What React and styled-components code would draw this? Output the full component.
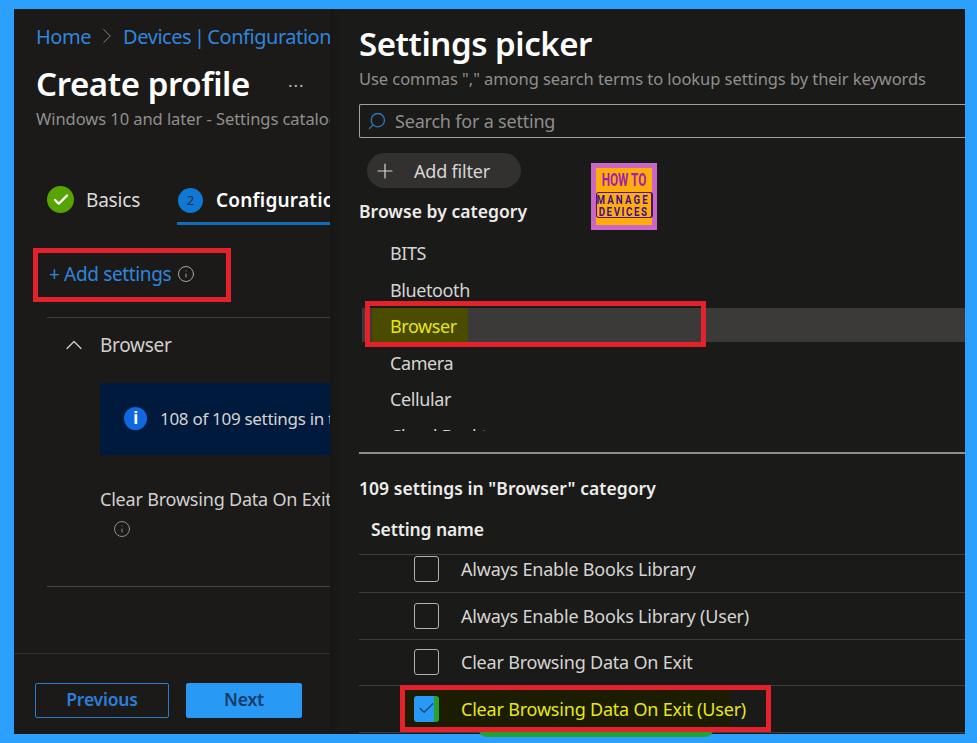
import React from "react";
import styled, { createGlobalStyle } from "styled-components";
import { Check, ChevronRight, ChevronUp, Info, Plus, Search } from "lucide-react";

const Global = createGlobalStyle`
  html, body { margin: 0; padding: 0; background: #2ba0ff; }
  * { box-sizing: border-box; }
`;

const Frame = styled.div`
  position: relative;
  width: 977px;
  height: 743px;
  padding: 9px 12px 9px 14px;
  display: flex;
  overflow: hidden;
  background: #2ba0ff;
  font-family: "Noto Sans", "Open Sans", sans-serif;
  color: #d6d4d2;
  white-space: nowrap;
`;

const LeftPanel = styled.section`
  width: 316px;
  flex: none;
  display: flex;
  flex-direction: column;
  overflow: hidden;
  background: #1b1a19;
`;

const Breadcrumb = styled.nav`
  margin-top: 13px;
  padding-left: 22px;
  height: 28px;
  display: flex;
  align-items: center;
  gap: 3px;
  font-size: 20px;
  letter-spacing: -0.45px;
  word-spacing: -2px;
  color: #2f86dc;
  svg { color: #8a8886; flex: none; }
`;

const TitleRow = styled.div`
  margin-top: 11px;
  padding-left: 22px;
  height: 44px;
  display: flex;
  align-items: center;
  gap: 38px;
`;

const PageTitle = styled.h1`
  margin: 0;
  font-size: 33px;
  font-weight: 600;
  letter-spacing: -0.4px;
  color: #ffffff;
`;

const Ellipsis = styled.span`
  padding-bottom: 6px;
  color: #b5b3b1;
  font-size: 17px;
  letter-spacing: 1px;
`;

const Subtitle = styled.p`
  margin: ${(p) => p.$top}px 0 0;
  padding-left: ${(p) => p.$left}px;
  height: 22px;
  line-height: 22px;
  font-size: 16.5px;
  letter-spacing: -0.06px;
  color: #918f8d;
`;

const Tabs = styled.div`
  margin-top: 46px;
  padding-left: 33px;
  height: 50px;
  display: flex;
  gap: 37px;
`;

const Tab = styled.div`
  height: 49px;
  display: flex;
  align-items: center;
  gap: ${(p) => (p.$active ? 13 : 12)}px;
  flex: ${(p) => (p.$active ? "1 0 auto" : "none")};
  padding: ${(p) => (p.$active ? "3px 0 1px" : "0 0 2px")};
  font-size: 19px;
  letter-spacing: ${(p) => (p.$active ? "0.2px" : "-0.2px")};
  font-weight: ${(p) => (p.$active ? 600 : 400)};
  color: ${(p) => (p.$active ? "#ffffff" : "#dddbd9")};
  border-bottom: ${(p) => (p.$active ? "3px solid #0f6cbd" : "0")};
`;

const StepNumber = styled.span`
  width: 25px;
  height: 25px;
  border-radius: 50%;
  margin-left: 1px;
  display: flex;
  align-items: center;
  justify-content: center;
  background: #0f78d4;
  color: #12294a;
  font-size: 13px;
  font-weight: 400;
`;

const StepDone = styled.span`
  width: 27px;
  height: 27px;
  border-radius: 50%;
  display: flex;
  align-items: center;
  justify-content: center;
  background: #57a300;
  color: #fff;
`;

const AddSettings = styled.div`
  margin-top: 34px;
  padding-left: 35px;
  height: 28px;
  display: flex;
  align-items: center;
  gap: 6px;
  font-size: 19px;
  letter-spacing: -0.35px;
  color: #2f86dc;
  svg { color: #aaa8a6; }
`;

const Section = styled.div`
  margin: 29px 0 0 33px;
  height: 270px;
  border-top: 1px solid #3f3e3d;
  border-bottom: 1px solid #4a4948;
`;

const SectionHeader = styled.div`
  margin-top: 13px;
  padding-left: 13px;
  height: 28px;
  display: flex;
  align-items: center;
  gap: 12px;
  font-size: 19px;
  letter-spacing: -0.3px;
  color: #d2d0ce;
`;

const InfoBanner = styled.div`
  margin: 24px 0 0 53px;
  height: 72px;
  padding: 0 0 2px 24px;
  display: flex;
  align-items: center;
  gap: 13px;
  background: #001a3d;
  font-size: 17px;
  letter-spacing: -0.3px;
  color: #d6d4d2;
`;

const InfoDot = styled.span`
  width: 23px;
  height: 23px;
  border-radius: 50%;
  flex: none;
  display: flex;
  align-items: center;
  justify-content: center;
  background: #1068e0;
  color: #fff;
  font: 700 18px "Liberation Sans", sans-serif;
`;

const FieldLabel = styled.div`
  margin: 32px 0 0 53px;
  height: 24px;
  line-height: 24px;
  font-size: 18px;
  letter-spacing: -0.2px;
  color: #d2d0ce;
`;

const FieldInfo = styled.div`
  margin: 9px 0 0 66px;
  height: 18px;
  color: #9a9896;
`;

const Footer = styled.footer`
  margin-top: auto;
  height: 81px;
  padding: 29px 0 0 21px;
  display: flex;
  gap: 17px;
  border-top: 1px solid #302f2e;
`;

const Button = styled.button`
  width: ${(p) => p.$width}px;
  height: 35px;
  padding: 0 0 4px;
  border-radius: 2px;
  border: 1px solid ${(p) => (p.$primary ? "#2899f5" : "#2a7ec8")};
  background: ${(p) => (p.$primary ? "#2899f5" : "transparent")};
  color: ${(p) => (p.$primary ? "#0f3d68" : "#2b7fd8")};
  font: 600 17.5px "Noto Sans", sans-serif;
  letter-spacing: -0.2px;
`;

const RightPanel = styled.section`
  flex: 1;
  min-width: 0;
  padding-left: 29px;
  display: flex;
  flex-direction: column;
  overflow: hidden;
  background: #1a1a19;
  box-shadow: inset 6px 0 6px -4px #151514;
`;

const PickerTitle = styled.h2`
  margin: 13px 0 0;
  height: 44px;
  line-height: 44px;
  font-size: 33px;
  font-weight: 600;
  letter-spacing: -0.45px;
  color: #ffffff;
`;

const SearchBox = styled.div`
  margin-top: 14px;
  height: 34px;
  padding-left: 7px;
  display: flex;
  align-items: center;
  gap: 8px;
  border: 1px solid #a3a19f;
  border-right: 0;
  border-radius: 2px 0 0 2px;
  font-size: 18px;
  letter-spacing: -0.2px;
  color: #8f8d8b;
  svg { color: #2b7ab8; transform: scaleX(-1); }
`;

const FilterPill = styled.div`
  margin: 15px 0 0 8px;
  width: 154px;
  height: 35px;
  border-radius: 18px;
  padding-left: 6px;
  display: flex;
  align-items: center;
  gap: 17px;
  background: #323130;
  font-size: 18px;
  letter-spacing: -0.2px;
  color: #d8d6d4;
`;

const SectionTitle = styled.h3`
  margin: ${(p) => p.$top}px 0 0;
  height: 24px;
  line-height: 24px;
  font-size: 17.5px;
  font-weight: 600;
  letter-spacing: ${(p) => p.$spacing}px;
  color: #eeecea;
`;

const CategoryList = styled.ul`
  margin: 12px 0 0;
  padding: 0;
  list-style: none;
  height: 196px;
  overflow: hidden;
`;

const CategoryItem = styled.li`
  height: 36.5px;
  display: flex;
  align-items: center;
  margin-left: 3px;
  padding-left: ${(p) => (p.$selected ? 10 : 28)}px;
  font-size: 18px;
  letter-spacing: -0.4px;
  color: #d6d4d2;
  background: ${(p) =>
    p.$selected ? "linear-gradient(#3b3a39, #3b3a39) no-repeat 0 0 / 100% 34px" : "none"};
`;

const Highlight = styled.span`
  width: 96px;
  height: 34px;
  align-self: flex-start;
  padding-left: 18px;
  line-height: 36px;
  background: #4b4b00;
  color: #e4e61a;
`;

const Rule = styled.hr`
  margin: 21px 0 0;
  border: 0;
  height: 2px;
  background: #8f8d8b;
`;

const TableHeader = styled.div`
  margin-top: 17px;
  padding: 0 0 13px 12px;
  border-bottom: 1px solid #3f3e3d;
  font-size: 17.5px;
  line-height: 24px;
  font-weight: 600;
  letter-spacing: -0.1px;
  color: #eeecea;
`;

const RowList = styled.div`
  flex: 1;
  overflow: hidden;
`;

const RowScroller = styled.div`
  margin-top: -8.5px;
`;

const Row = styled.div`
  height: 46.5px;
  padding-left: 55px;
  display: flex;
  align-items: center;
  gap: 22px;
  border-bottom: 1px solid #3f3e3d;
  font-size: 18px;
  letter-spacing: -0.2px;
  color: ${(p) => (p.$checked ? "#e6e81e" : "#d6d4d2")};
  background: ${(p) =>
    p.$checked ? "linear-gradient(#1c1c00, #1c1c00) no-repeat 41px 0 / 330px 100%" : "none"};
`;

const Checkbox = styled.span`
  width: 25px;
  height: 26px;
  flex: none;
  display: flex;
  align-items: center;
  justify-content: center;
  border-radius: 3px;
  border: ${(p) => (p.$checked ? "0" : "1px solid #b3b1af")};
  background: ${(p) =>
    p.$checked ? "linear-gradient(90deg, #2899f5 0 82%, #2ca02c 82%)" : "none"};
  color: #123e66;
`;

const RedBox = styled.div`
  position: absolute;
  left: ${(p) => p.$x}px;
  top: ${(p) => p.$y}px;
  width: ${(p) => p.$w}px;
  height: ${(p) => p.$h}px;
  border: 5px solid #e3222c;
`;

const GreenSmear = styled.div`
  position: absolute;
  left: 478px;
  top: 728px;
  width: 236px;
  height: 9px;
  border-radius: 0 0 30px 30px;
  background: #27a12f;
`;

const Logo = styled.div`
  position: absolute;
  left: 591px;
  top: 163px;
  width: 66px;
  height: 67px;
  padding-top: 3px;
  border: 5px solid #c966c6;
  background: #ffad0d;
  display: flex;
  flex-direction: column;
  align-items: center;
  font-family: "Roboto", sans-serif;
  font-weight: 700;
`;

const LogoTop = styled.span`
  font-size: 19px;
  line-height: 18px;
  color: #a11fae;
  transform: scaleX(0.62);
`;

const LogoFrame = styled.div`
  margin-top: 3px;
  width: 57px;
  height: 26px;
  flex: none;
  border: 1px solid #4b1468;
  border-right-width: 2px;
  border-radius: 3px;
  display: flex;
  flex-direction: column;
  align-items: center;
  color: #3f1090;
  font-size: 13.5px;
  line-height: 12px;
`;

const LogoWord = styled.span`
  letter-spacing: ${(p) => p.$gap}px;
  transform: scaleX(0.72);
`;

const rows = [
  "Always Enable Books Library",
  "Always Enable Books Library (User)",
  "Clear Browsing Data On Exit",
];

export default function App() {
  return (
    <Frame>
      <Global />
      <LeftPanel>
        <Breadcrumb>
          <span>Home</span>
          <ChevronRight size={26} strokeWidth={0.9} />
          <span>Devices | Configuration</span>
        </Breadcrumb>
        <TitleRow>
          <PageTitle>Create profile</PageTitle>
          <Ellipsis>...</Ellipsis>
        </TitleRow>
        <Subtitle $top={3} $left={22}>Windows 10 and later - Settings catalog</Subtitle>
        <Tabs>
          <Tab>
            <StepDone><Check size={18} strokeWidth={3.2} /></StepDone>
            Basics
          </Tab>
          <Tab $active>
            <StepNumber>2</StepNumber>
            Configuration settings
          </Tab>
        </Tabs>
        <AddSettings>
          <span>+ Add settings</span>
          <Info size={18} strokeWidth={1.3} />
        </AddSettings>
        <Section>
          <SectionHeader>
            <ChevronUp size={28} strokeWidth={1.1} />
            Browser
          </SectionHeader>
          <InfoBanner>
            <InfoDot>i</InfoDot>
            108 of 109 settings in this category
          </InfoBanner>
          <FieldLabel>Clear Browsing Data On Exit</FieldLabel>
          <FieldInfo><Info size={18} strokeWidth={1.2} /></FieldInfo>
        </Section>
        <Footer>
          <Button $width={134}>Previous</Button>
          <Button $width={116} $primary>Next</Button>
        </Footer>
      </LeftPanel>

      <RightPanel>
        <PickerTitle>Settings picker</PickerTitle>
        <Subtitle $top={2} $left={0}>Use commas "," among search terms to lookup settings by their keywords</Subtitle>
        <SearchBox>
          <Search size={20} strokeWidth={1.6} />
          Search for a setting
        </SearchBox>
        <FilterPill>
          <Plus size={24} strokeWidth={1.2} />
          Add filter
        </FilterPill>
        <SectionTitle $top={11} $spacing={0.05}>Browse by category</SectionTitle>
        <CategoryList>
          <CategoryItem>BITS</CategoryItem>
          <CategoryItem>Bluetooth</CategoryItem>
          <CategoryItem $selected><Highlight>Browser</Highlight></CategoryItem>
          <CategoryItem>Camera</CategoryItem>
          <CategoryItem>Cellular</CategoryItem>
          <CategoryItem>Cloud Desktop</CategoryItem>
        </CategoryList>
        <Rule />
        <SectionTitle $top={22} $spacing={0.05}>109 settings in "Browser" category</SectionTitle>
        <TableHeader>Setting name</TableHeader>
        <RowList>
          <RowScroller>
            {rows.map((r) => (
              <Row key={r}>
                <Checkbox />
                {r}
              </Row>
            ))}
            <Row $checked>
              <Checkbox $checked><Check size={19} strokeWidth={1.4} /></Checkbox>
              Clear Browsing Data On Exit (User)
            </Row>
          </RowScroller>
        </RowList>
      </RightPanel>

      <GreenSmear />
      <RedBox $x={33} $y={248} $w={198} $h={54} />
      <RedBox $x={365} $y={301} $w={341} $h={46} />
      <RedBox $x={400} $y={685} $w={371} $h={47} />
      <Logo>
        <LogoTop>HOW TO</LogoTop>
        <LogoFrame>
          <LogoWord $gap={3}>MANAGE</LogoWord>
          <LogoWord $gap={2.2}>DEVICES</LogoWord>
        </LogoFrame>
      </Logo>
    </Frame>
  );
}
